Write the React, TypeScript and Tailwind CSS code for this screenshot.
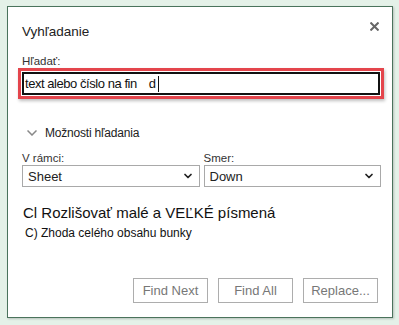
import { ChevronDown } from 'lucide-react';

function Select({ value }: { value: string }) {
  return (
    <div className="flex h-[22px] items-center justify-between border border-[#a9a9a9] bg-white pl-[5px] pr-[5px]">
      <span className="text-[13px] leading-none text-[#222]">{value}</span>
      <ChevronDown size={12} strokeWidth={3.5} className="text-[#222]" />
    </div>
  );
}

function Button({ label }: { label: string }) {
  return (
    <div className="flex h-[25px] w-[75px] items-center justify-center border border-[#adadad] bg-white text-[13px] text-[#777]">
      {label}
    </div>
  );
}

export default function App() {
  return (
    <div
      className="h-[325px] w-[399px] bg-[#e4f1e8] pl-[7px] pr-[6px] pt-[6px]"
      style={{ fontFamily: '"Liberation Sans", Arial, sans-serif' }}
    >
      <div className="flex h-[312px] flex-col border border-[#4a735c] bg-white pl-[14px] pr-[11px] shadow-[1px_1px_2px_rgba(0,0,0,0.2)]">
        {/* hlavicka */}
        <div className="flex items-start justify-between pt-[15px]">
          <h1 className="pt-[1px] text-[13.5px] leading-[18px] text-[#222]">Vyhľadanie</h1>
          <svg width="9" height="9" viewBox="0 0 9 9" className="mr-[2px]">
            <path d="M0.5 0.5 L8.5 8.5 M8.5 0.5 L0.5 8.5" stroke="#666" strokeWidth="2" />
          </svg>
        </div>

        <div className="mt-[13px] text-[11.5px] leading-[14px] text-[#333]">Hľadať:</div>

        {/* vstup so zvyraznenim */}
        <div className="-ml-[4px] -mr-[3px] border-[3px] border-[#e4454c] p-[1px] shadow-[1px_2px_3px_rgba(0,0,0,0.25)]">
          <div className="flex h-[23px] items-center border-2 border-[#111] pl-[1px] text-[13px] text-[#111]">
            <span className="tracking-[-0.45px]">text alebo číslo na fin</span>
            <span className="ml-[12px]">d</span>
            <span className="ml-[2px] h-[16px] w-px bg-[#111]" />
          </div>
        </div>

        <div className="mt-[26px] flex items-center pl-[5px]">
          <svg width="10" height="6" viewBox="0 0 10 6">
            <path d="M0.5 0.5 L5 5 L9.5 0.5" fill="none" stroke="#888" strokeWidth="1.5" />
          </svg>
          <span className="ml-[8px] text-[12px] leading-[16px] tracking-[-0.2px] text-[#222]">Možnosti hľadania</span>
        </div>

        <div className="mt-[10px] grid grid-cols-2 gap-[4px]">
          <div>
            <div className="text-[11.5px] leading-[14px] text-[#333]">V rámci:</div>
            <Select value="Sheet" />
          </div>
          <div>
            <div className="text-[11.5px] leading-[14px] text-[#333]">Smer:</div>
            <Select value="Down" />
          </div>
        </div>

        <div className="mt-[16px] pl-[1px] text-[15px] leading-[20px] text-[#111]">Cl Rozlišovať malé a VEĽKÉ písmená</div>
        <div className="mt-[2px] pl-[3px] text-[12px] leading-[16px] text-[#111]">C) Zhoda celého obsahu bunky</div>

        <div className="mb-[14px] mt-auto flex justify-end gap-[10px] pr-[3px]">
          <Button label="Find Next" />
          <Button label="Find All" />
          <Button label="Replace..." />
        </div>
      </div>
    </div>
  );
}
